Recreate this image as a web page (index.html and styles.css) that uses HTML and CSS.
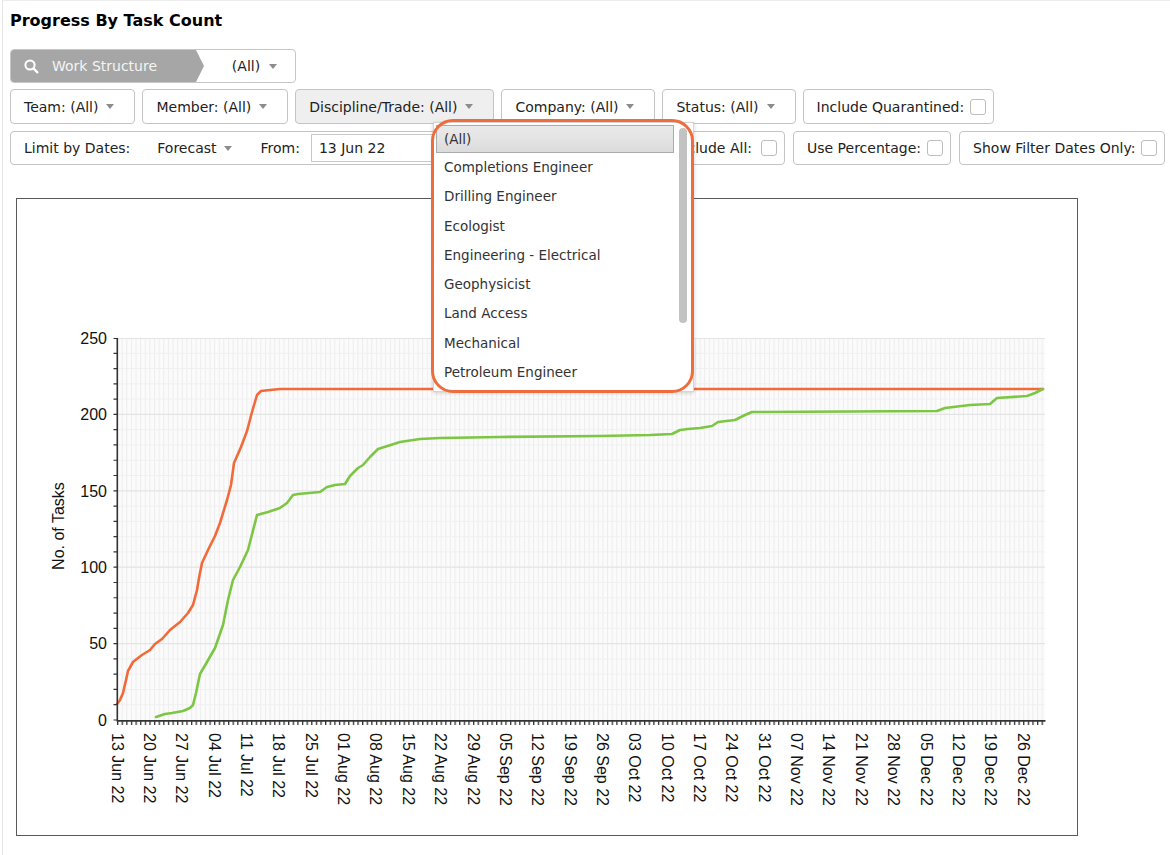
FILE: index.html
```html
<!DOCTYPE html>
<html>
<head>
<meta charset="utf-8">
<title>Progress By Task Count</title>
<link rel="stylesheet" href="styles.css">
</head>
<body>
<div class="page">
  <h1 class="title">Progress By Task Count</h1>

  <div class="ws">
    <div class="ws-label">
      <svg class="ws-icon" width="15" height="15" viewBox="0 0 15 15"><circle cx="6" cy="6" r="4.6" fill="none" stroke="#fff" stroke-width="2"/><line x1="9.4" y1="9.4" x2="13.4" y2="13.4" stroke="#fff" stroke-width="2.2" stroke-linecap="round"/></svg>
      <span>Work Structure</span>
    </div>
    <div class="ws-value"><span>(All)</span><span class="caret"></span></div>
  </div>

  <div class="row row1">
    <div class="btn">Team: (All)<span class="caret"></span></div>
    <div class="btn">Member: (All)<span class="caret"></span></div>
    <div class="btn active">Discipline/Trade: (All)<span class="caret"></span></div>
    <div class="btn">Company: (All)<span class="caret"></span></div>
    <div class="btn">Status: (All)<span class="caret"></span></div>
    <div class="btn chk">Include Quarantined:<span class="check"></span></div>
  </div>

  <div class="row row2">
    <div class="btn limit">
      <span>Limit by Dates:</span>
      <span class="forecast">Forecast</span><span class="caret"></span>
      <span class="from">From:</span>
      <span class="date-input">13 Jun 22</span>
      <span class="incl">Include All:</span><span class="check"></span>
    </div>
    <div class="btn chk">Use Percentage:<span class="check"></span></div>
    <div class="btn chk">Show Filter Dates Only:<span class="check"></span></div>
  </div>

  <div class="chart">
    <svg class="chart-svg" width="1060" height="636" viewBox="17 199 1060 636">
      <defs>
        <pattern id="vg" x="117" y="0" width="4.623" height="10" patternUnits="userSpaceOnUse">
          <rect width="4.623" height="10" fill="#fbfbfb"/>
          <rect x="0" width="1" height="10" fill="#ededed"/>
        </pattern>
        <pattern id="xt" x="117" y="0" width="4.623" height="10" patternUnits="userSpaceOnUse">
          <rect x="0" width="1.3" height="10" fill="#333"/>
        </pattern>
      </defs>
      <rect x="117" y="338" width="928" height="382" fill="url(#vg)"/>
      <path d="M117 704.72H1045M117 689.44H1045M117 674.16H1045M117 658.88H1045M117 628.32H1045M117 613.04H1045M117 597.76H1045M117 582.48H1045M117 551.92H1045M117 536.64H1045M117 521.36H1045M117 506.08H1045M117 475.52H1045M117 460.24H1045M117 444.96H1045M117 429.68H1045M117 399.12H1045M117 383.84H1045M117 368.56H1045M117 353.28H1045" stroke="#f0f0f0" stroke-width="1" fill="none"/>
      <path d="M117 643.6H1045M117 567.2H1045M117 490.8H1045M117 414.4H1045M117 338.5H1045" stroke="#e4e4e4" stroke-width="1.2" fill="none"/>

      <path class="line-plan" d="M117 704 L120 700 L123 693 L126 680 L128 671 L133 662 L138 658 L142 655 L150 650 L155 644 L162 639 L170 630 L180 622 L188 613 L193 605 L197 590 L199 578 L202 563 L208 550 L215 536 L220 523 L227 500 L231 485 L234 463 L241 447 L247 431 L252 412 L257 395 L261 391 L270 390 L280 389 L1043 389"/>
      <path class="line-actual" d="M156 717 L165 714 L172 713 L183 711 L190 708 L193 705 L196 693 L200 674 L207 662 L215 648 L223 625 L228 600 L233 580 L240 567 L248 550 L257 515 L268 512 L280 508 L287 503 L293 495 L298 494 L320 492 L327 487 L335 485 L345 484 L350 476 L358 468 L363 465 L370 457 L378 449 L400 442 L420 439 L440 438 L500 437 L600 436 L650 435 L672 434 L680 430 L688 429 L700 428 L712 426 L718 422 L735 420 L745 415 L752 412 L937 411 L945 408 L970 405 L990 404 L997 398 L1027 396 L1035 393 L1043 389"/>

      <rect x="117" y="721" width="929" height="4" fill="url(#xt)"/>
      <line x1="117" y1="720.8" x2="1045.5" y2="720.8" stroke="#333" stroke-width="1.8"/>
      <line x1="117.3" y1="338" x2="117.3" y2="721.5" stroke="#333" stroke-width="1.6"/>
      <path d="M113.5 720H117M113.5 704.72H117M113.5 689.44H117M113.5 674.16H117M113.5 658.88H117M113.5 643.6H117M113.5 628.32H117M113.5 613.04H117M113.5 597.76H117M113.5 582.48H117M113.5 567.2H117M113.5 551.92H117M113.5 536.64H117M113.5 521.36H117M113.5 506.08H117M113.5 490.8H117M113.5 475.52H117M113.5 460.24H117M113.5 444.96H117M113.5 429.68H117M113.5 414.4H117M113.5 399.12H117M113.5 383.84H117M113.5 368.56H117M113.5 353.28H117M113.5 338.5H117" stroke="#333" stroke-width="1.2" fill="none"/>

      <g class="ylab">
        <text x="107" y="338" dy="0.36em">250</text>
        <text x="107" y="414.4" dy="0.36em">200</text>
        <text x="107" y="490.8" dy="0.36em">150</text>
        <text x="107" y="567.2" dy="0.36em">100</text>
        <text x="107" y="643.6" dy="0.36em">50</text>
        <text x="107" y="720" dy="0.36em">0</text>
      </g>
      <text class="ytitle" transform="translate(64 526) rotate(-90)">No. of Tasks</text>

      <g class="xlab">
        <text transform="translate(111.5 733) rotate(90)">13 Jun 22</text>
        <text transform="translate(143.9 733) rotate(90)">20 Jun 22</text>
        <text transform="translate(176.2 733) rotate(90)">27 Jun 22</text>
        <text transform="translate(208.6 733) rotate(90)">04 Jul 22</text>
        <text transform="translate(240.9 733) rotate(90)">11 Jul 22</text>
        <text transform="translate(273.3 733) rotate(90)">18 Jul 22</text>
        <text transform="translate(305.7 733) rotate(90)">25 Jul 22</text>
        <text transform="translate(338.0 733) rotate(90)">01 Aug 22</text>
        <text transform="translate(370.4 733) rotate(90)">08 Aug 22</text>
        <text transform="translate(402.7 733) rotate(90)">15 Aug 22</text>
        <text transform="translate(435.1 733) rotate(90)">22 Aug 22</text>
        <text transform="translate(467.5 733) rotate(90)">29 Aug 22</text>
        <text transform="translate(499.8 733) rotate(90)">05 Sep 22</text>
        <text transform="translate(532.2 733) rotate(90)">12 Sep 22</text>
        <text transform="translate(564.5 733) rotate(90)">19 Sep 22</text>
        <text transform="translate(596.9 733) rotate(90)">26 Sep 22</text>
        <text transform="translate(629.3 733) rotate(90)">03 Oct 22</text>
        <text transform="translate(661.6 733) rotate(90)">10 Oct 22</text>
        <text transform="translate(694.0 733) rotate(90)">17 Oct 22</text>
        <text transform="translate(726.3 733) rotate(90)">24 Oct 22</text>
        <text transform="translate(758.7 733) rotate(90)">31 Oct 22</text>
        <text transform="translate(791.1 733) rotate(90)">07 Nov 22</text>
        <text transform="translate(823.4 733) rotate(90)">14 Nov 22</text>
        <text transform="translate(855.8 733) rotate(90)">21 Nov 22</text>
        <text transform="translate(888.1 733) rotate(90)">28 Nov 22</text>
        <text transform="translate(920.5 733) rotate(90)">05 Dec 22</text>
        <text transform="translate(952.9 733) rotate(90)">12 Dec 22</text>
        <text transform="translate(985.2 733) rotate(90)">19 Dec 22</text>
        <text transform="translate(1017.6 733) rotate(90)">26 Dec 22</text>
      </g>
    </svg>
  </div>
</div>

<div class="dropdown">
  <ul class="dd-list">
    <li class="dd-item selected">(All)</li>
    <li class="dd-item">Completions Engineer</li>
    <li class="dd-item">Drilling Engineer</li>
    <li class="dd-item">Ecologist</li>
    <li class="dd-item">Engineering - Electrical</li>
    <li class="dd-item">Geophysicist</li>
    <li class="dd-item">Land Access</li>
    <li class="dd-item">Mechanical</li>
    <li class="dd-item">Petroleum Engineer</li>
  </ul>
  <div class="dd-thumb"></div>
</div>
<div class="annot"></div>
</body>
</html>
```

FILE: styles.css
```css
* { box-sizing: border-box; }

body {
  margin: 0;
  background: #fff;
  font-family: "DejaVu Sans", Verdana, sans-serif;
  color: #222;
}

.page {
  margin-left: 2px;
  border-left: 1px solid #e4e4e4;
  border-top: 1px solid #ededed;
  padding: 10px 0 0 7px;
  height: 855px;
}

.title {
  margin: 0;
  font-size: 16px;
  line-height: 20px;
  font-weight: bold;
  color: #000;
}

/* Work structure selector */
.ws {
  margin-top: 18px;
  display: flex;
  width: 286px;
  height: 34px;
  border: 1px solid #c6c6c6;
  border-radius: 4px;
  overflow: hidden;
  font-size: 14px;
}
.ws-label {
  width: 193px;
  background: #a6a6a6;
  color: #f4f4f4;
  display: flex;
  align-items: center;
  gap: 13px;
  padding-left: 13px;
  clip-path: polygon(0 0, 185px 0, 193px 50%, 185px 100%, 0 100%);
}
.ws-icon { flex: none; }
.ws-value {
  flex: 1;
  display: flex;
  align-items: center;
  justify-content: center;
  gap: 9px;
  color: #222;
  padding-left: 10px;
}

/* Filter rows */
.row {
  display: flex;
  gap: 8px;
}
.row1 { margin-top: 6px; gap: 7px; }
.row2 { margin-top: 7px; }

.btn {
  height: 35px;
  border: 1px solid #c4c4c4;
  border-radius: 4px;
  background: #fff;
  display: flex;
  align-items: center;
  gap: 8px;
  padding: 0 20px 0 13px;
  font-size: 14px;
  white-space: nowrap;
}
.row2 .btn { height: 34px; }
.btn.active { background: #efefef; }
.btn.chk { padding-right: 7px; gap: 6px; }

.caret {
  display: inline-block;
  width: 0;
  height: 0;
  border-left: 4.5px solid transparent;
  border-right: 4.5px solid transparent;
  border-top: 5px solid #8c8c8c;
}

.check {
  display: inline-block;
  width: 16px;
  height: 16px;
  border: 1px solid #bdbdbd;
  border-radius: 3px;
  background: #fff;
}

.limit {
  width: 775px;
  gap: 0;
  padding-right: 7px;
}
.limit .forecast { margin-left: 27px; margin-right: 7px; }
.limit .from { margin-left: 29px; margin-right: 11px; }
.limit .incl { margin-left: auto; margin-right: 9px; }
.date-input {
  width: 122px;
  height: 28px;
  border: 1px solid #c9c9c9;
  padding-left: 7px;
  display: flex;
  align-items: center;
  color: #222;
}

/* Chart */
.chart {
  margin-top: 33px;
  margin-left: 6px;
  width: 1062px;
  height: 638px;
  border: 1px solid #5a5a5a;
  background: #fff;
}
.chart-svg { display: block; }
.line-plan, .line-actual {
  fill: none;
  stroke-width: 2.6;
  stroke-linejoin: round;
  stroke-linecap: round;
}
.line-plan { stroke: #f26a3a; }
.line-actual { stroke: #7cc644; }
.ylab text {
  font-family: "Liberation Sans", Arial, sans-serif;
  font-size: 16px;
  fill: #111;
  text-anchor: end;
}
.ytitle {
  font-family: "Liberation Sans", Arial, sans-serif;
  font-size: 16px;
  fill: #111;
  text-anchor: middle;
}
.xlab text {
  font-family: "Liberation Sans", Arial, sans-serif;
  font-size: 16px;
  fill: #111;
}

/* Open dropdown list */
.dropdown {
  position: absolute;
  left: 433px;
  top: 122px;
  width: 261px;
  height: 270px;
  background: #fff;
  border: 1px solid #d4d4d4;
  box-shadow: 0 1px 4px rgba(0, 0, 0, 0.18);
  overflow: hidden;
  font-size: 13.5px;
  color: #333;
}
.dd-list {
  list-style: none;
  margin: 0;
  padding: 2px 19px 0 2px;
}
.dd-item {
  height: 29.25px;
  line-height: 29.25px;
  padding-left: 8px;
  white-space: nowrap;
}
.dd-item.selected {
  height: 28px;
  line-height: 26px;
  padding-left: 7px;
  border: 1px solid #ababab;
  background: linear-gradient(#eaeaea, #dcdcdc);
}
.dd-thumb {
  position: absolute;
  left: 245px;
  top: 5px;
  width: 8px;
  height: 195px;
  border-radius: 4px;
  background: #c2c2c2;
}

/* Highlight annotation */
.annot {
  position: absolute;
  left: 431px;
  top: 119px;
  width: 263px;
  height: 274px;
  border: 3px solid #ef6c3c;
  border-radius: 22px;
  pointer-events: none;
}
```
